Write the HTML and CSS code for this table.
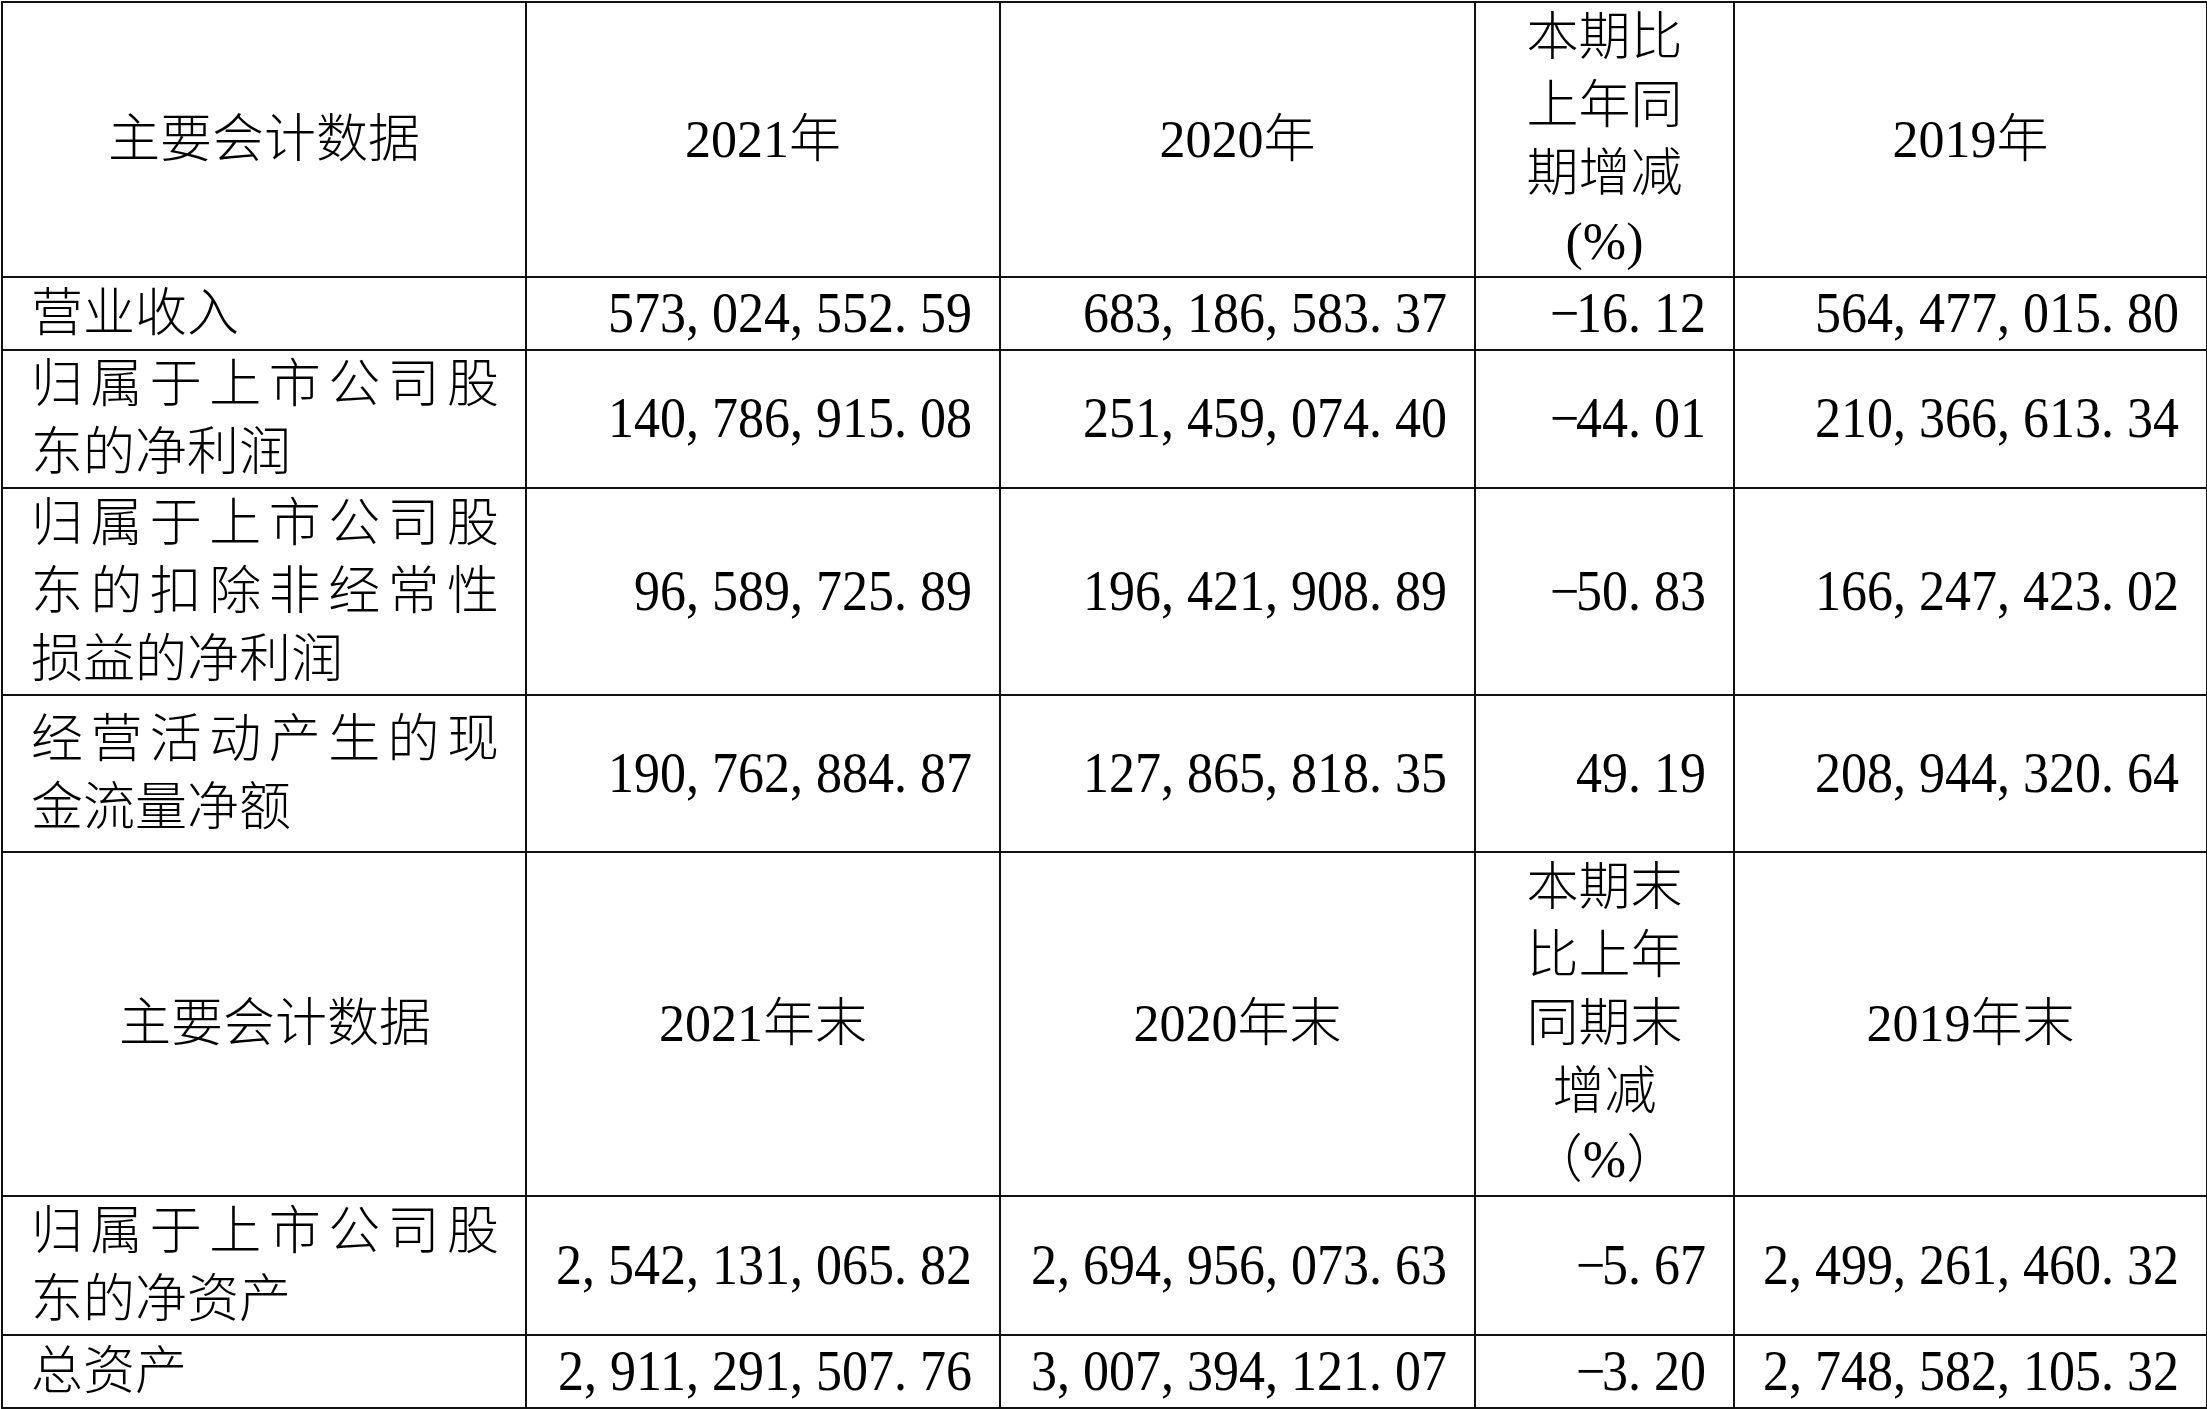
FILE: index.html
```html
<!DOCTYPE html>
<html lang="zh-CN">
<head>
<meta charset="utf-8">
<title>主要会计数据</title>
<link rel="stylesheet" href="styles.css">
</head>
<body>
<table class="sheet">
  <colgroup>
    <col class="c1"><col class="c2"><col class="c3"><col class="c4"><col class="c5">
  </colgroup>
  <tbody>
    <tr class="row-hd1 hd">
      <td>主要会计数据</td>
      <td>2021年</td>
      <td>2020年</td>
      <td>本期比<br>上年同<br>期增减<br>(%)</td>
      <td>2019年</td>
    </tr>
    <tr class="row-1">
      <td class="lbl">营业收入</td>
      <td class="num"><span class="v">573<span class="p">,</span>024<span class="p">,</span>552<span class="p">.</span>59</span></td>
      <td class="num"><span class="v">683<span class="p">,</span>186<span class="p">,</span>583<span class="p">.</span>37</span></td>
      <td class="num"><span class="v"><span class="p">−</span>16<span class="p">.</span>12</span></td>
      <td class="num"><span class="v">564<span class="p">,</span>477<span class="p">,</span>015<span class="p">.</span>80</span></td>
    </tr>
    <tr class="row-2">
      <td class="lbl"><span class="jl">归属于上市公司股</span><span class="ln">东的净利润</span></td>
      <td class="num"><span class="v">140<span class="p">,</span>786<span class="p">,</span>915<span class="p">.</span>08</span></td>
      <td class="num"><span class="v">251<span class="p">,</span>459<span class="p">,</span>074<span class="p">.</span>40</span></td>
      <td class="num"><span class="v"><span class="p">−</span>44<span class="p">.</span>01</span></td>
      <td class="num"><span class="v">210<span class="p">,</span>366<span class="p">,</span>613<span class="p">.</span>34</span></td>
    </tr>
    <tr class="row-3">
      <td class="lbl"><span class="jl">归属于上市公司股</span><span class="jl">东的扣除非经常性</span><span class="ln">损益的净利润</span></td>
      <td class="num"><span class="v">96<span class="p">,</span>589<span class="p">,</span>725<span class="p">.</span>89</span></td>
      <td class="num"><span class="v">196<span class="p">,</span>421<span class="p">,</span>908<span class="p">.</span>89</span></td>
      <td class="num"><span class="v"><span class="p">−</span>50<span class="p">.</span>83</span></td>
      <td class="num"><span class="v">166<span class="p">,</span>247<span class="p">,</span>423<span class="p">.</span>02</span></td>
    </tr>
    <tr class="row-4">
      <td class="lbl"><span class="jl">经营活动产生的现</span><span class="ln">金流量净额</span></td>
      <td class="num"><span class="v">190<span class="p">,</span>762<span class="p">,</span>884<span class="p">.</span>87</span></td>
      <td class="num"><span class="v">127<span class="p">,</span>865<span class="p">,</span>818<span class="p">.</span>35</span></td>
      <td class="num"><span class="v">49<span class="p">.</span>19</span></td>
      <td class="num"><span class="v">208<span class="p">,</span>944<span class="p">,</span>320<span class="p">.</span>64</span></td>
    </tr>
    <tr class="row-hd2 hd">
      <td class="shift">主要会计数据</td>
      <td>2021年末</td>
      <td>2020年末</td>
      <td>本期末<br>比上年<br>同期末<br>增减<br>（%）</td>
      <td>2019年末</td>
    </tr>
    <tr class="row-5">
      <td class="lbl"><span class="jl">归属于上市公司股</span><span class="ln">东的净资产</span></td>
      <td class="num"><span class="v">2<span class="p">,</span>542<span class="p">,</span>131<span class="p">,</span>065<span class="p">.</span>82</span></td>
      <td class="num"><span class="v">2<span class="p">,</span>694<span class="p">,</span>956<span class="p">,</span>073<span class="p">.</span>63</span></td>
      <td class="num"><span class="v"><span class="p">−</span>5<span class="p">.</span>67</span></td>
      <td class="num"><span class="v">2<span class="p">,</span>499<span class="p">,</span>261<span class="p">,</span>460<span class="p">.</span>32</span></td>
    </tr>
    <tr class="row-6">
      <td class="lbl">总资产</td>
      <td class="num"><span class="v">2<span class="p">,</span>911<span class="p">,</span>291<span class="p">,</span>507<span class="p">.</span>76</span></td>
      <td class="num"><span class="v">3<span class="p">,</span>007<span class="p">,</span>394<span class="p">,</span>121<span class="p">.</span>07</span></td>
      <td class="num"><span class="v"><span class="p">−</span>3<span class="p">.</span>20</span></td>
      <td class="num"><span class="v">2<span class="p">,</span>748<span class="p">,</span>582<span class="p">,</span>105<span class="p">.</span>32</span></td>
    </tr>
  </tbody>
</table>
</body>
</html>
```

FILE: styles.css
```css
html, body {
  margin: 0;
  padding: 0;
  background: #ffffff;
}

.sheet {
  border-collapse: collapse;
  table-layout: fixed;
  width: 2205px;
  margin: 1px 0 0 1px;
  font-family: "Liberation Serif", "Noto Sans CJK SC", serif;
  font-size: 52px;
  line-height: 68px;
  font-weight: 300;
  color: #000000;
}

.c1 { width: 524px; }
.c2 { width: 474px; }
.c3 { width: 475px; }
.c4 { width: 259px; }
.c5 { width: 473px; }

.sheet td {
  border: 2px solid #111111;
  box-sizing: border-box;
  padding: 0 26px 0 28px;
  vertical-align: middle;
  white-space: nowrap;
}

.sheet .hd td {
  text-align: center;
  padding: 0;
}

.sheet .hd td.shift {
  padding-left: 22px;
}

.sheet td.num {
  text-align: right;
  padding: 0 27px 0 0;
}

.v {
  display: inline-block;
  transform: scaleY(1.09);
  transform-origin: 50% 60%;
}

.jl {
  display: block;
  text-align: justify;
  text-align-last: justify;
}

.ln {
  display: block;
  text-align: left;
}

.p {
  display: inline-block;
  width: 0.5em;
  text-align: left;
}

.row-hd1 > td { height: 275px; }
.row-1 > td { height: 73px; }
.row-2 > td { height: 138px; }
.row-3 > td { height: 207px; }
.row-4 > td { height: 157px; }
.row-hd2 > td { height: 344px; }
.row-5 > td { height: 139px; }
.row-6 > td { height: 73px; }
```
